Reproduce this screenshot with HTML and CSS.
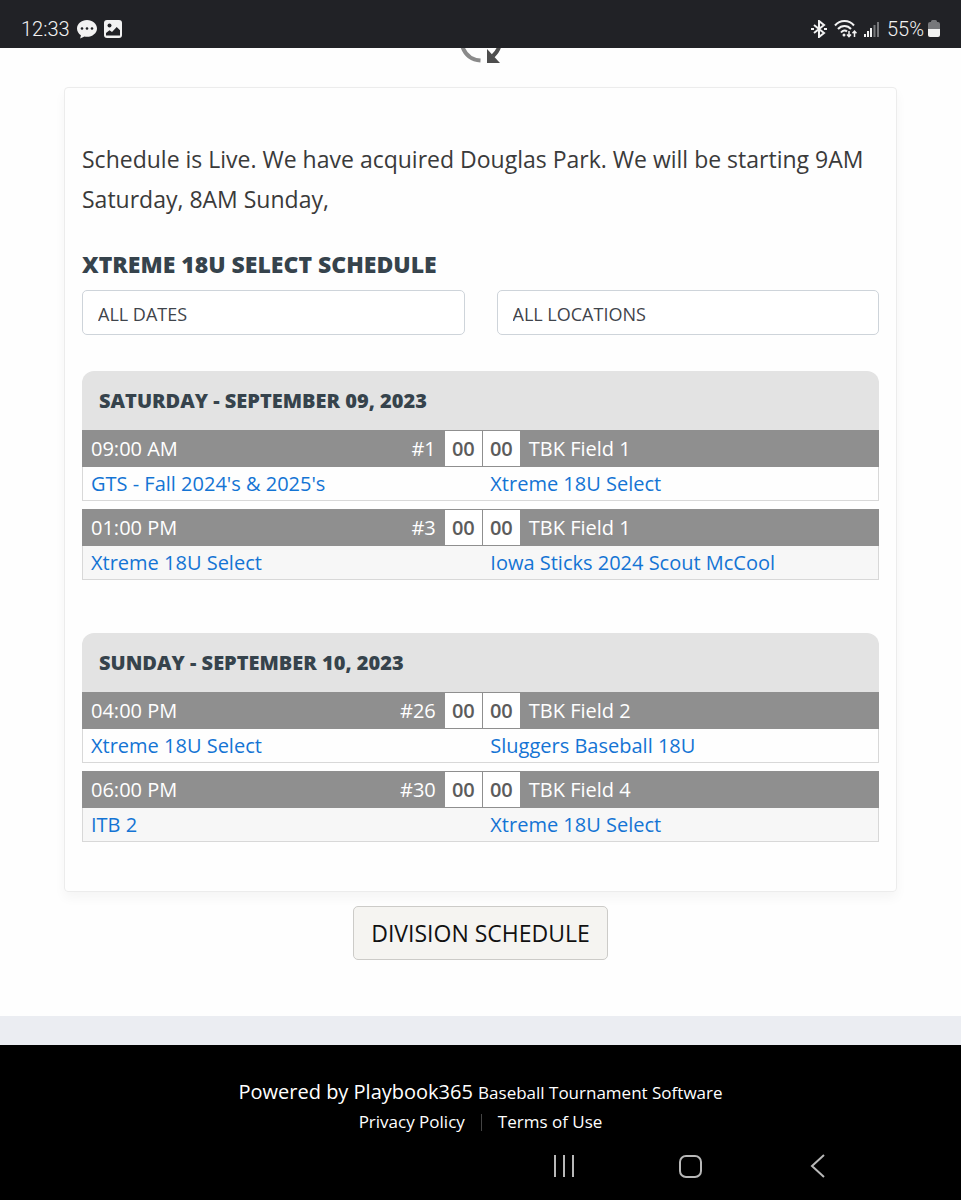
FILE: index.html
```html
<!DOCTYPE html>
<html lang="en">
<head>
    <meta charset="UTF-8">
    <meta name="viewport" content="width=device-width, initial-scale=1.0">
    <title>Xtreme 18U Select Schedule</title>
    <link rel="stylesheet" href="styles.css">
</head>
<body>
    <div class="status-bar">
        <div class="status-left">
            <span>12:33</span>
            <svg width="20" height="20" viewBox="0 0 20 20">
                <path fill="#f2f2f2" d="M10 1C4.500 1 0 4.700 0 9.500c0 2.800 1.500 5.200 3.900 6.800L3.200 19.500l4.300-2c.8.200 1.600.3 2.500.3 5.500 0 10-3.700 10-8.300S15.500 1 10 1z"/>
                <circle cx="5" cy="9.500" r="1.300" fill="#212226"/>
                <circle cx="10" cy="9.500" r="1.300" fill="#212226"/>
                <circle cx="15" cy="9.500" r="1.300" fill="#212226"/>
            </svg>
            <svg width="18" height="18" viewBox="0 0 18 18">
                <rect width="18" height="18" rx="3" fill="#f2f2f2"/>
                <circle cx="5.500" cy="5.500" r="2" fill="#212226"/>
                <path fill="#212226" d="M2 15.500v-2.500l3.500-2.700 2.500 1.700 4.700-5 3.300 3.200v5.300z"/>
            </svg>
        </div>
        <div class="status-right">
            <svg width="16" height="18" viewBox="0 0 16 18" fill="none" stroke="#f2f2f2" stroke-width="2">
                <path d="M3 5l10 8-5 4V1l5 4-10 8"/>
                <path d="M0 9h3M13 9h3"/>
            </svg>
            <svg width="23" height="18" viewBox="0 0 23 18" fill="none" stroke="#f2f2f2" stroke-width="2">
                <path d="M1 5.500c5-6 14-6 19 0M4 9c3.500-4 9.500-4 13 0M7 12.500c2-2.500 4.500-2.500 6 -1"/>
                <circle cx="10" cy="15" r="1.500" fill="#f2f2f2" stroke="none"/>
                <path stroke-width="1.500" d="M15 11v6M13 14.500l2 2.200 2-2.200M20.500 17v-6M18.500 13.200l2-2.200 2 2.200"/>
            </svg>
            <svg width="16" height="18" viewBox="0 0 16 18">
                <path fill="#f2f2f2" d="M0 14h2v3H0zM3 11h2v6H3zM6 8h2v9H6z"/>
                <path fill="#77787b" d="M9.500 5h2v12h-2zM13 2h2v15h-2z"/>
            </svg>
            <div class="battery">
                <span>55%</span>
                <svg width="12" height="18" viewBox="0 0 12 18">
                    <path fill="#77787b" d="M3 1.500Q3 0 4.500 0h3Q9 0 9 1.500V2h1q2 0 2 2v5H0V4q0-2 2-2h1z"/>
                    <path fill="#f2f2f2" d="M0 9h12v6q0 2-2 2H2q-2 0-2-2z"/>
                </svg>
            </div>
        </div>
    </div>

    <div class="loader">
        <svg width="42" height="16" viewBox="0 0 42 16">
            <path fill="none" stroke="#8a8a8a" stroke-width="4" d="M2.500-1c3 8 9 13 18 13.500"/>
            <path fill="none" stroke="#4d4d4d" stroke-width="4" d="M39-1c-1 4-3 6-6 9"/>
            <path fill="#4d4d4d" d="M27 1v14h13z"/>
        </svg>
    </div>

    <main>
        <div class="card">
            <p class="notice">Schedule is Live. We have acquired Douglas Park. We will be starting 9AM Saturday, 8AM Sunday,</p>
            <h1>XTREME 18U SELECT SCHEDULE</h1>

            <div class="filters">
                <select aria-label="Dates">
                    <option>ALL DATES</option>
                </select>
                <select aria-label="Locations">
                    <option>ALL LOCATIONS</option>
                </select>
            </div>

            <section class="day">
                <h2>SATURDAY - SEPTEMBER 09, 2023</h2>
                <table class="game">
                    <tr class="game-head">
                        <td>09:00 AM</td>
                        <td class="number">#1</td>
                        <td class="score">00</td>
                        <td class="score">00</td>
                        <td class="field">TBK Field 1</td>
                    </tr>
                    <tr class="teams">
                        <td colspan="3"><a href="#">GTS - Fall 2024's &amp; 2025's</a></td>
                        <td colspan="2"><a href="#">Xtreme 18U Select</a></td>
                    </tr>
                </table>
                <table class="game alt">
                    <tr class="game-head">
                        <td>01:00 PM</td>
                        <td class="number">#3</td>
                        <td class="score">00</td>
                        <td class="score">00</td>
                        <td class="field">TBK Field 1</td>
                    </tr>
                    <tr class="teams">
                        <td colspan="3"><a href="#">Xtreme 18U Select</a></td>
                        <td colspan="2"><a href="#">Iowa Sticks 2024 Scout McCool</a></td>
                    </tr>
                </table>
            </section>

            <section class="day">
                <h2>SUNDAY - SEPTEMBER 10, 2023</h2>
                <table class="game">
                    <tr class="game-head">
                        <td>04:00 PM</td>
                        <td class="number">#26</td>
                        <td class="score">00</td>
                        <td class="score">00</td>
                        <td class="field">TBK Field 2</td>
                    </tr>
                    <tr class="teams">
                        <td colspan="3"><a href="#">Xtreme 18U Select</a></td>
                        <td colspan="2"><a href="#">Sluggers Baseball 18U</a></td>
                    </tr>
                </table>
                <table class="game alt">
                    <tr class="game-head">
                        <td>06:00 PM</td>
                        <td class="number">#30</td>
                        <td class="score">00</td>
                        <td class="score">00</td>
                        <td class="field">TBK Field 4</td>
                    </tr>
                    <tr class="teams">
                        <td colspan="3"><a href="#">ITB 2</a></td>
                        <td colspan="2"><a href="#">Xtreme 18U Select</a></td>
                    </tr>
                </table>
            </section>
        </div>

        <button class="division-btn">DIVISION SCHEDULE</button>
    </main>

    <footer>
        <div class="powered"><a href="#">Powered by Playbook365</a> <a class="small" href="#">Baseball Tournament Software</a></div>
        <div class="legal">
            <a href="#">Privacy Policy</a>
            <span class="divider"></span>
            <a href="#">Terms of Use</a>
        </div>
        <div class="nav-bar">
            <button aria-label="Recent apps">
                <svg width="24" height="24" viewBox="0 0 24 24" fill="none" stroke="#b8b8b8" stroke-width="2"><path d="M3 1v22M12 1v22M21 1v22"/></svg>
            </button>
            <button aria-label="Home">
                <svg width="24" height="24" viewBox="0 0 24 24" fill="none" stroke="#b8b8b8" stroke-width="2"><rect x="1" y="2" width="21" height="21" rx="6"/></svg>
            </button>
            <button aria-label="Back">
                <svg width="24" height="24" viewBox="0 0 24 24" fill="none" stroke="#b8b8b8" stroke-width="2"><path d="M18 1L6 12l12 11"/></svg>
            </button>
        </div>
    </footer>
</body>
</html>
```
FILE: styles.css
```css
* {
  box-sizing: border-box;
}

body {
  margin: 0;
  font-family: "Open Sans", sans-serif;
  font-size: 20px;
  color: #3a3a3a;
  background-color: #fefefe;
}

svg {
  display: block;
}

a {
  color: #1474d4;
  text-decoration: none;
}

.status-bar {
  display: flex;
  justify-content: space-between;
  height: 48px;
  padding: 9px 21px 0;
  background-color: #212226;
  color: #f2f2f2;
  font-family: Roboto, sans-serif;
  font-size: 20px;
  font-weight: 300;
}

.status-left,
.status-right {
  display: flex;
  align-items: center;
  gap: 7px;
}

.battery {
  display: flex;
  align-items: center;
  gap: 4px;
}

.loader {
  display: flex;
  justify-content: center;
  height: 39px;
}

main {
  padding: 0 64px 56px;
  text-align: center;
}

.card {
  padding: 51px 17px 49px;
  border: 1px solid #ececec;
  border-radius: 4px;
  box-shadow: 0 6px 12px rgba(0, 0, 0, 0.04);
  text-align: left;
}

.notice {
  margin: 0 0 32px;
  font-size: 23px;
  line-height: 40px;
}

h1 {
  margin: 0 0 13px;
  font-size: 23px;
  font-weight: 800;
  line-height: 26px;
  color: #36434c;
}

.filters {
  display: grid;
  grid-template-columns: 1fr 1fr;
  gap: 32px;
  margin-bottom: 36px;
}

.filters select {
  appearance: none;
  height: 45px;
  padding: 2px 15px 0;
  border: 1px solid #ced4da;
  border-radius: 5px;
  background-color: #fff;
  color: #3f444b;
  font-family: inherit;
  font-size: 18px;
}

.day + .day {
  margin-top: 53px;
}

h2 {
  margin: 0;
  padding: 0 17px;
  border-radius: 12px 12px 0 0;
  background-color: #e3e3e3;
  color: #36434c;
  font-size: 20px;
  font-weight: 800;
  line-height: 59px;
}

.game {
  width: 100%;
  table-layout: fixed;
  border-collapse: collapse;
}

.game + .game {
  margin-top: 8px;
}

.game td {
  padding: 0 8px;
}

.game-head td {
  height: 36px;
  border: 1px solid #8f8f8f;
  background-color: #8f8f8f;
  color: #fff;
}

.game .number {
  width: 100px;
  text-align: right;
}

.game .score {
  width: 38px;
  padding: 0;
  background-color: #fff;
  color: #5c5c5c;
  font-weight: 600;
  text-align: center;
}

.game .field {
  width: 45%;
}

.teams {
  border: 1px solid #d8d8d8;
}

.teams td {
  height: 34px;
}

.alt .teams {
  background-color: #f7f7f7;
}

.division-btn {
  height: 54px;
  margin-top: 14px;
  padding: 0 17px;
  border: 1px solid #cccbc8;
  border-radius: 5px;
  background-color: #f5f4f1;
  color: #111;
  font-family: inherit;
  font-size: 23px;
}

footer {
  padding-top: 32px;
  border-top: 29px solid #ebedf2;
  background-color: #000;
  text-align: center;
}

footer a {
  color: #fff;
}

.powered {
  line-height: 30px;
}

.small,
.legal {
  font-size: 17px;
}

.legal {
  display: flex;
  justify-content: center;
  align-items: center;
  gap: 16px;
  line-height: 28px;
}

.divider {
  width: 1px;
  height: 17px;
  background-color: #444;
}

.nav-bar {
  display: flex;
  justify-content: flex-end;
  gap: 103px;
  padding: 18px 131px 23px 0;
}

.nav-bar button {
  padding: 0;
  border: none;
  background: none;
}
```
